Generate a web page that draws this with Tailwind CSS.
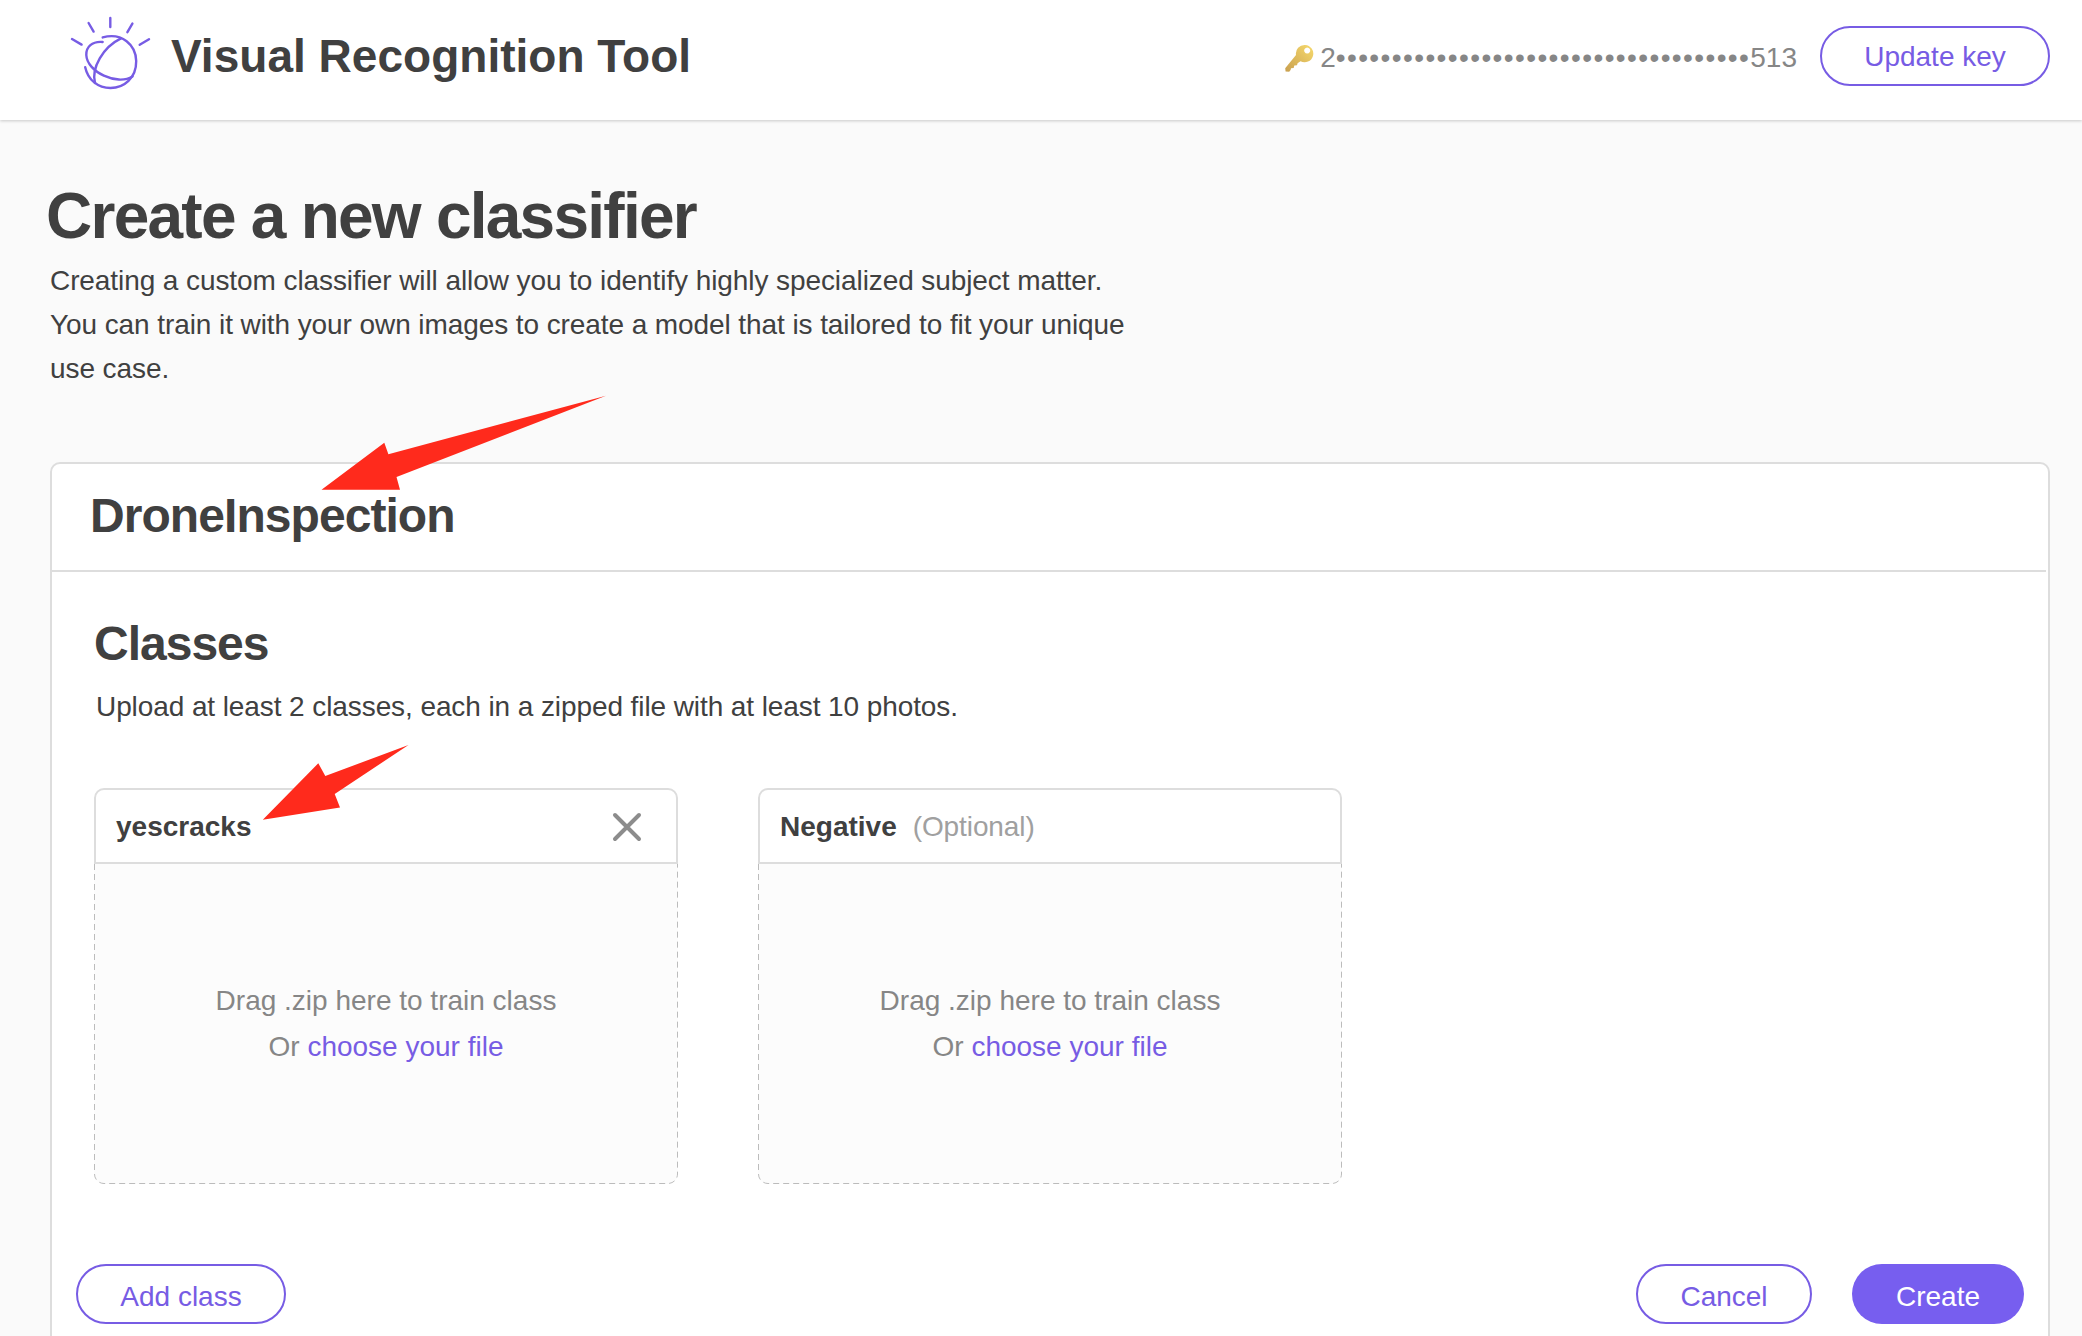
<!DOCTYPE html>
<html lang="en">
<head>
<meta charset="utf-8">
<title>Visual Recognition Tool</title>
<script src="https://cdn.jsdelivr.net/npm/@tailwindcss/browser@4"></script>
</head>
<body class="relative h-[1336px] w-[2082px] overflow-hidden bg-[#fafafa] font-['Liberation_Sans',Arial,sans-serif] text-[28px] text-[#404040]">
<header class="flex h-[120px] items-start bg-white pl-[68px] pr-8 shadow-[0_1px_3px_rgba(0,0,0,0.2)]">
  <svg class="mt-4 h-20 w-[84px] shrink-0" viewBox="68 16 84 80" fill="none" stroke="#775ce4" stroke-width="2.400" stroke-linecap="round">
    <path d="M110.300 18v9M88.600 23l5 8.600M132.400 23.600l-5 8.600M72 39l9.600 5.600M149 39.200l-9.300 5.600"/>
    <path d="M102.700 37.400C122 32 136 45 136.200 61C136.400 78 124 88 110.500 88C98 88 88 80 85.200 67.200"/>
    <path d="M102.700 42C92 41 86 47 86.300 55C87 72 117 86 132.500 76.500"/>
    <path d="M121 38.300C103 47 91 68 95 83"/>
  </svg>
  <h1 class="ml-[19px] mt-[28px] text-[46px] font-bold leading-[56px] tracking-[0.02px] whitespace-nowrap">Visual Recognition Tool</h1>
  <div class="ml-auto mr-[23px] mt-[39px] flex items-center leading-[38px] text-[#868686]">
    <svg class="mr-[6px] h-[30px] w-[30px]" viewBox="1284 41 30 30">
      <defs><linearGradient id="gold" x1="1" y1="0" x2="0" y2="1"><stop offset="0" stop-color="#f7da6c"/><stop offset="1" stop-color="#c9a050"/></linearGradient></defs>
      <path fill="url(#gold)" fill-rule="evenodd" d="M1296 53A8.700 8.700 0 1 1 1300.500 59.300L1297.600 61.200L1297 63.200L1294.300 63.600L1293.700 66L1291 66.200L1290.600 68L1289.200 69.800L1285.600 69.500L1285.200 66.300ZM1307.200 45.400a3 3 0 1 0 .01 0z"/>
    </svg>
    <span>2</span><span class="tracking-[1.400px]">•••••••••••••••••••••••••••••••••••••</span><span>513</span>
  </div>
  <button class="mt-[26px] h-[60px] w-[230px] shrink-0 rounded-full border-2 border-[#775ce4] pt-px text-[#775ce4]">Update key</button>
</header>

<main class="px-[50px] pt-[60px]">
  <h2 class="-ml-[4px] text-[64px] font-bold leading-[72px] tracking-[-1.750px]">Create a new classifier</h2>
  <p class="mt-[7px] leading-[44px] tracking-[-0.085px] whitespace-nowrap">Creating a custom classifier will allow you to identify highly specialized subject matter.<br>You can train it with your own images to create a model that is tailored to fit your unique<br>use case.</p>

  <section class="mt-[71px] h-[900px] w-[2000px] rounded-[10px] border-2 border-[#dddddd] bg-white">
    <div class="mr-[2px] h-[108px] border-b-2 border-[#dddddd] pl-[38px] pt-[24px] text-[48px] font-bold leading-[56px] tracking-[-0.940px]">DroneInspection</div>
    <div class="px-[42px] pt-[44px]">
      <h3 class="text-[48px] font-bold leading-[56px] tracking-[-1px]">Classes</h3>
      <p class="mt-[13px] pl-[2px] leading-[44px] tracking-[-0.090px]">Upload at least 2 classes, each in a zipped file with at least 10 photos.</p>
      <div class="mt-[59px] flex gap-20">
        <article class="w-[584px]">
          <div class="flex h-[76px] items-center rounded-t-[10px] border-2 border-[#dddddd] px-[20px] font-bold"><span class="pt-px">yescracks</span>
            <svg class="ml-auto mr-[14px] mt-[2px] size-[30px]" viewBox="0 0 30 30" stroke="#8c8c8c" stroke-width="4" stroke-linecap="round"><path d="M3 3l24 24M27 3L3 27"/></svg>
          </div>
          <div class="relative flex h-[320px] flex-col items-center justify-center rounded-b-[10px] bg-[#fcfcfc] leading-[46px] text-[#868686]">
            <svg class="absolute inset-0 h-[320px] w-[584px]" viewBox="0 0 584 320" fill="none" stroke="#bcbcbc" stroke-dasharray="6 4"><path d="M.5 0V310a9.500 9.500 0 0 0 9.500 9.500H574a9.500 9.500 0 0 0 9.500-9.500V0"/></svg>
            <p>Drag .zip here to train class</p><p>Or <a class="text-[#775ce4]">choose your file</a></p>
          </div>
        </article>
        <article class="w-[584px]">
          <div class="flex h-[76px] items-center rounded-t-[10px] border-2 border-[#dddddd] px-[20px]"><b class="pt-px">Negative</b><span class="ml-4 pt-px text-[#a0a0a0] tracking-[-0.100px]">(Optional)</span></div>
          <div class="relative flex h-[320px] flex-col items-center justify-center rounded-b-[10px] bg-[#fcfcfc] leading-[46px] text-[#868686]">
            <svg class="absolute inset-0 h-[320px] w-[584px]" viewBox="0 0 584 320" fill="none" stroke="#bcbcbc" stroke-dasharray="6 4"><path d="M.5 0V310a9.500 9.500 0 0 0 9.500 9.500H574a9.500 9.500 0 0 0 9.500-9.500V0"/></svg>
            <p>Drag .zip here to train class</p><p>Or <a class="text-[#775ce4]">choose your file</a></p>
          </div>
        </article>
      </div>
    </div>
    <div class="mt-20 flex px-6">
      <button class="h-[60px] w-[210px] rounded-full border-2 border-[#775ce4] pt-[5px] text-[#775ce4]">Add class</button>
      <button class="ml-auto h-[60px] w-[176px] rounded-full border-2 border-[#775ce4] pt-[5px] text-[#775ce4]">Cancel</button>
      <button class="ml-10 h-[60px] w-[172px] rounded-full bg-[#775eef] pt-[5px] text-white">Create</button>
    </div>
  </section>
</main>
<svg class="pointer-events-none absolute left-0 top-0 h-[1336px] w-[2082px]" viewBox="0 0 2082 1336" fill="#ff2a1c">
  <path d="M606 395.700L388.400 454.300L384.300 442.700L321.500 489.700H400L396.500 477Z"/>
  <path d="M408.500 745L325.300 776L318.300 763.300L262.800 819.700L340 807.400L334.700 794Z"/>
</svg>
</body>
</html>
